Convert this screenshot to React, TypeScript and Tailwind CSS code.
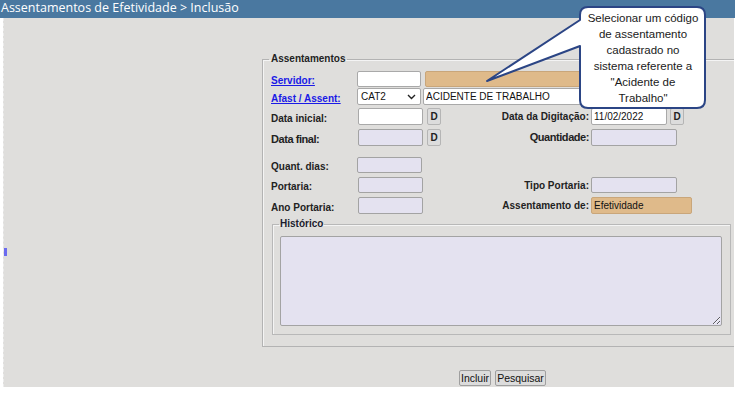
import React from 'react';

// Shared look of the old-style form controls
const box = 'h-full rounded-[2px] border px-[2px] text-[10px] text-[#111] outline-none';
const white = 'bg-white border-[#a9a9a9]';
const lilac = 'bg-[#e4e2f0] border-[#a3a3a3]';
const tan = 'bg-[#dfba8a] border-[#c9a67a]';

const Label: React.FC<{ children: React.ReactNode; link?: boolean; big?: boolean }> = ({ children, link, big }) => (
  <span
    className={
      'whitespace-nowrap font-bold ' +
      (big ? 'text-[11px] tracking-[-0.04em] ' : 'text-[10px] ') +
      (link ? 'text-[#1a1ae6] underline' : 'text-[#222]')
    }
  >
    {children}
  </span>
);

const DButton = () => (
  <button className="ml-[4px] flex h-full w-[14px] items-center justify-center rounded-[2px] border border-[#b5b5b5] bg-[#dcdcdc] text-[10px] font-bold text-[#222]">
    D
  </button>
);

interface RowProps {
  label: React.ReactNode;
  left?: React.ReactNode;
  rightLabel?: React.ReactNode;
  right?: React.ReactNode;
  className?: string;
}

const Row: React.FC<RowProps> = ({ label, left, rightLabel, right, className }) => (
  <div className={'flex items-center ' + (className ?? '')}>
    <div className="w-[86px]">{label}</div>
    <div className="flex h-full w-[138px] items-center">{left}</div>
    <div className="flex w-[94px] justify-end">{rightLabel}</div>
    <div className="ml-[2px] flex h-full items-center">{right}</div>
  </div>
);

export default function App() {
  return (
    <div className="relative h-[398px] w-[735px] overflow-hidden bg-white [font-family:'Liberation_Sans',Arial,sans-serif]">
      {/* page title bar */}
      <div className="h-[18px] bg-[#4a78a0] pl-[1px] text-[12.5px] leading-[16px] text-white [font-family:'Open_Sans',sans-serif]">
        Assentamentos de Efetividade &gt; Inclusão
      </div>

      {/* grey page body */}
      <div className="relative ml-[3px] h-[369px] w-[731px] overflow-hidden border-l border-dashed border-[#ececec] bg-[#dfdedc]">
        <div className="absolute left-0 top-[230px] h-[8px] w-[3px] bg-[#6b6bef]" />

        <fieldset className="ml-[258px] mt-[35px] w-[490px] border border-[#b3b3b3] pb-[11px] pl-[8px] shadow-[inset_1px_1px_0_#f4f4f4]">
          <legend className="ml-[-2px] px-[2px] text-[10px] font-bold leading-[12px] text-[#222]">Assentamentos</legend>

          <div className="mt-[6px] flex h-[16px] items-center">
            <div className="w-[86px]">
              <Label link>Servidor:</Label>
            </div>
            <input readOnly className={box + ' ' + white + ' w-[64px]'} />
            <input readOnly className={box + ' ' + tan + ' ml-[4px] w-[265px]'} />
          </div>

          <div className="mt-[1px] flex h-[17px] items-center">
            <div className="w-[86px]">
              <Label link>Afast / Assent:</Label>
            </div>
            <div className={box + ' ' + white + ' flex w-[64px] items-center justify-between pl-[3px] pr-[4px] text-[10.5px]'}>
              <span>CAT2</span>
              <svg width="9" height="6" viewBox="0 0 9 6" fill="none" stroke="#222" strokeWidth="1.4">
                <path d="M1 1l3.5 3.5L8 1" />
              </svg>
            </div>
            <input
              readOnly
              value="ACIDENTE DE TRABALHO"
              className={box + ' ' + white + ' ml-[2px] w-[267px] text-[10.5px]'}
            />
          </div>

          <Row
            className="mt-[3px] h-[17px]"
            label={<Label>Data inicial:</Label>}
            left={
              <>
                <input readOnly className={box + ' ' + white + ' ml-[1px] w-[65px]'} />
                <DButton />
              </>
            }
            rightLabel={<Label>Data da Digitação:</Label>}
            right={
              <>
                <input readOnly value="11/02/2022" className={box + ' ' + white + ' w-[76px]'} />
                <div className="ml-[-1px] h-full">
                  <DButton />
                </div>
              </>
            }
          />

          <Row
            className="mt-[4px] h-[17px]"
            label={<Label big>Data final:</Label>}
            left={
              <>
                <input readOnly className={box + ' ' + lilac + ' ml-[1px] w-[65px]'} />
                <DButton />
              </>
            }
            rightLabel={<Label big>Quantidade:</Label>}
            right={<input readOnly className={box + ' ' + lilac + ' w-[86px]'} />}
          />

          <Row
            className="mt-[11px] h-[16px]"
            label={<Label>Quant. dias:</Label>}
            left={<input readOnly className={box + ' ' + lilac + ' w-[65px]'} />}
          />

          <Row
            className="mt-[4px] h-[16px]"
            label={<Label>Portaria:</Label>}
            left={<input readOnly className={box + ' ' + lilac + ' ml-[1px] w-[65px]'} />}
            rightLabel={<Label>Tipo Portaria:</Label>}
            right={<input readOnly className={box + ' ' + lilac + ' w-[86px]'} />}
          />

          <Row
            className="mt-[4px] h-[17px]"
            label={<Label>Ano Portaria:</Label>}
            left={<input readOnly className={box + ' ' + lilac + ' ml-[1px] w-[65px]'} />}
            rightLabel={<Label>Assentamento de:</Label>}
            right={<input readOnly value="Efetividade" className={box + ' ' + tan + ' w-[101px] text-[10.5px]'} />}
          />

          <fieldset className="ml-[1px] mt-[4px] w-[459px] border border-[#b8b8b8] pb-[8px] pl-[7px] shadow-[inset_1px_1px_0_#f4f4f4]">
            <legend className="ml-[-1px] px-[1px] text-[10px] font-bold leading-[12px] text-[#1b1b2e]">Histórico</legend>
            <textarea
              readOnly
              className="mt-[6px] block h-[90px] w-[442px] rounded-[2px] border border-[#a3a3a3] bg-[#e4e2f0] outline-none"
            />
          </fieldset>
        </fieldset>

        <div className="mt-[23px] flex gap-[4px] pl-[455px]">
          <button className="h-[16px] w-[32px] rounded-[2px] border border-[#9f9f9f] bg-[#dcdcdc] text-[10.5px] text-[#111]">
            Incluir
          </button>
          <button className="h-[16px] w-[51px] rounded-[2px] border border-[#9f9f9f] bg-[#dcdcdc] text-[10.5px] text-[#111]">
            Pesquisar
          </button>
        </div>
      </div>

      {/* help callout over the form */}
      <svg className="pointer-events-none absolute left-0 top-0" width="735" height="398">
        <path
          d="M588 7 H697 Q705 7 705 15 V100 Q705 108 697 108 H588 Q580 108 580 100 V46 L487 81 L580 20 V15 Q580 7 588 7 Z"
          fill="#fff"
          stroke="#2b4585"
          strokeWidth="2"
          strokeLinejoin="round"
        />
      </svg>
      <div className="pointer-events-none absolute left-[580px] top-[7px] flex h-[101px] w-[126px] flex-col items-center justify-center text-center text-[11.5px] leading-[16px] text-[#1a1a1a]">
        <span>Selecionar um código</span>
        <span>de assentamento</span>
        <span>cadastrado no</span>
        <span>sistema referente a</span>
        <span>"Acidente de</span>
        <span>Trabalho"</span>
      </div>
    </div>
  );
}
